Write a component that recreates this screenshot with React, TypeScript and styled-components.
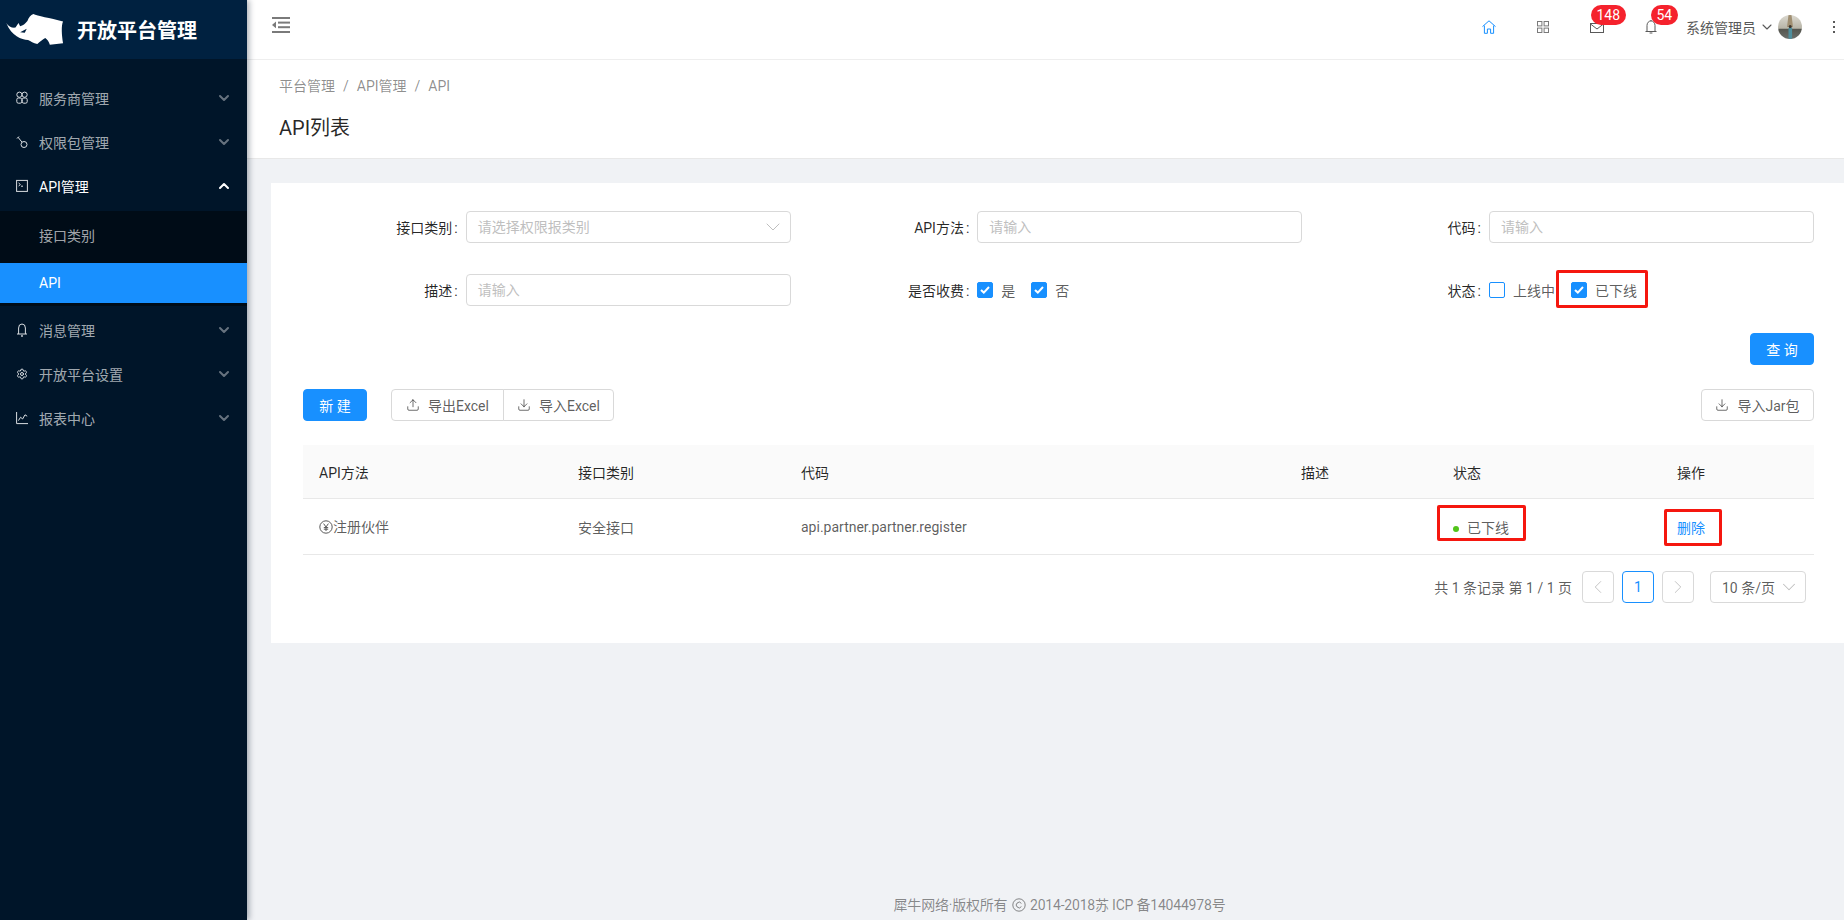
import React from "react";
import styled, { createGlobalStyle } from "styled-components";
import { ChevronDown, ChevronUp, ChevronLeft, ChevronRight, Download, Settings, Upload } from "lucide-react";

const GlobalStyle = createGlobalStyle`
    html, body {
        margin: 0;
        height: 100%;
        overflow: hidden;
        background: #f0f2f5;
    }
    body {
        font-family: Roboto, "Noto Sans CJK SC", sans-serif;
        font-size: 14px;
        color: rgba(0, 0, 0, 0.65);
    }
    * {
        box-sizing: border-box;
    }
`;

const Layout = styled.div`
    display: flex;
    width: 1844px;
    height: 920px;
    overflow: hidden;
`;

const Sider = styled.aside`
    flex: 0 0 247px;
    background: #001529;
    box-shadow: 2px 0 6px rgba(0, 21, 41, 0.35);
    position: relative;
    z-index: 2;
`;

const Brand = styled.div`
    height: 59px;
    background: #002140;
    display: flex;
    align-items: center;
    padding-left: 6px;
    gap: 13px;
    color: #fff;
    font-size: 20px;
    font-weight: 700;
`;

const Menu = styled.nav`
    padding-top: 15px;
`;

const MenuItem = styled.div<{ $open?: boolean }>`
    height: 40px;
    margin: 4px 0;
    padding: 0 15px 0 16px;
    display: flex;
    align-items: center;
    color: ${(p) => (p.$open ? "#fff" : "rgba(255, 255, 255, 0.65)")};
    svg.icon {
        width: 12px;
        height: 14px;
        margin-right: 11px;
    }
    span {
        flex: 1;
    }
`;

const SubMenu = styled.div`
    background: #000c17;
    padding: 4px 0 3px;
    margin-top: 5px;
`;

const SubItem = styled.div<{ $active?: boolean }>`
    height: 40px;
    padding-left: 39px;
    display: flex;
    align-items: center;
    color: ${(p) => (p.$active ? "#fff" : "rgba(255, 255, 255, 0.65)")};
    background: ${(p) => (p.$active ? "#1890ff" : "transparent")};
    & + & {
        margin-top: 8px;
    }
`;

const Main = styled.main`
    flex: 1;
    min-width: 0;
    display: flex;
    flex-direction: column;
`;

const TopBar = styled.header`
    height: 60px;
    flex: none;
    background: #fff;
    border-bottom: 1px solid #eeeeee;
    display: flex;
    align-items: center;
    padding-left: 25px;
    color: #595959;
`;

const CollapseIcon = styled.svg`
    margin-bottom: 9px;
`;

const TopActions = styled.div`
    margin-left: auto;
    display: flex;
    align-items: center;
`;

const TopIcon = styled.div<{ $w: number }>`
    position: relative;
    width: ${(p) => p.$w}px;
    height: 34px;
    display: flex;
    align-items: center;
    margin-bottom: 6px;
`;

const Badge = styled.span<{ $left: number }>`
    position: absolute;
    top: -5px;
    left: ${(p) => p.$left}px;
    height: 20px;
    padding: 0 5.5px;
    border-radius: 10px;
    background: #f5222d;
    color: #fff;
    font-size: 14px;
    line-height: 20px;
    white-space: nowrap;
`;

const UserName = styled.span`
    margin-bottom: 6px;
    white-space: nowrap;
`;

const Avatar = styled.svg`
    width: 24px;
    height: 24px;
    border-radius: 50%;
    margin: 0 0 6px 3px;
`;

const PageHead = styled.section`
    height: 99px;
    flex: none;
    background: #fff;
    border-bottom: 1px solid #e8e8e8;
    padding: 16px 32px 0;
`;

const Breadcrumb = styled.div`
    color: rgba(0, 0, 0, 0.45);
    line-height: 20px;
    i {
        font-style: normal;
        margin: 0 8px;
    }
`;

const PageTitle = styled.h1`
    margin: 16px 0 0;
    font-size: 20px;
    font-weight: 400;
    line-height: 32px;
    color: rgba(0, 0, 0, 0.85);
`;

const Card = styled.section`
    margin: 24px 0 0 24px;
    background: #fff;
    padding: 28px 30px 40px 32px;
`;

const FormGrid = styled.div`
    display: grid;
    grid-template-columns: repeat(3, 1fr);
    column-gap: 24px;
    row-gap: 31px;
`;

const Field = styled.div`
    display: flex;
    justify-content: flex-end;
    align-items: center;
    height: 32px;
`;

const Label = styled.label`
    color: rgba(0, 0, 0, 0.85);
    white-space: nowrap;
    &::after {
        content: ":";
        margin: 0 8px 0 2px;
    }
`;

const Control = styled.div`
    width: 325px;
    display: flex;
    align-items: center;
`;

const Input = styled.div`
    position: relative;
    width: 325px;
    height: 32px;
    border: 1px solid #d9d9d9;
    border-radius: 4px;
    padding: 0 11px;
    line-height: 30px;
    color: #bfbfbf;
    svg {
        position: absolute;
        right: 5px;
        top: 3px;
    }
`;

const Check = styled.label`
    display: inline-flex;
    align-items: center;
    padding-right: 8px;
    margin-right: 8px;
    white-space: nowrap;
`;

const CheckBox = styled.span<{ $on?: boolean }>`
    width: 16px;
    height: 16px;
    border-radius: 2px;
    border: 1px solid #1890ff;
    background: ${(p) => (p.$on ? "#1890ff" : "#fff")};
    margin-right: 8px;
    display: flex;
    align-items: center;
    justify-content: center;
`;

const Marked = styled.span<{ $inset: string }>`
    position: relative;
    display: inline-flex;
    &::after {
        content: "";
        position: absolute;
        inset: ${(p) => p.$inset};
        border: 3px solid #f5170f;
        border-radius: 2px;
        pointer-events: none;
    }
`;

const QueryRow = styled.div`
    display: flex;
    justify-content: flex-end;
    margin-top: 27px;
`;

const Toolbar = styled.div`
    display: flex;
    align-items: center;
    margin-top: 24px;
`;

const Button = styled.button<{ $primary?: boolean; $width: number }>`
    width: ${(p) => p.$width}px;
    height: 32px;
    padding: 0;
    font: inherit;
    border-radius: 4px;
    border: 1px solid ${(p) => (p.$primary ? "#1890ff" : "#d9d9d9")};
    background: ${(p) => (p.$primary ? "#1890ff" : "#fff")};
    color: ${(p) => (p.$primary ? "#fff" : "rgba(0, 0, 0, 0.65)")};
    display: inline-flex;
    align-items: center;
    justify-content: center;
    gap: 8px;
`;

const ButtonGroup = styled.div`
    display: flex;
    margin-left: 24px;
    ${Button}:first-child {
        border-radius: 4px 0 0 4px;
    }
    ${Button}:last-child {
        border-radius: 0 4px 4px 0;
        margin-left: -1px;
    }
`;

const ToolbarEnd = styled.div`
    margin-left: auto;
`;

const Table = styled.table`
    width: 1511px;
    margin-top: 24px;
    table-layout: fixed;
    border-collapse: separate;
    border-spacing: 0;
`;

const Th = styled.th<{ $w: number }>`
    width: ${(p) => p.$w}px;
    height: 54px;
    padding: 0 16px;
    text-align: left;
    font-weight: 400;
    color: rgba(0, 0, 0, 0.85);
    background: #fafafa;
    border-bottom: 1px solid #e8e8e8;
`;

const Td = styled.td`
    height: 56px;
    padding: 0 16px;
    border-bottom: 1px solid #e8e8e8;
    white-space: nowrap;
`;

const MethodCell = styled.span`
    display: inline-flex;
    align-items: center;
    svg {
        margin-top: 1px;
    }
`;

const StatusDot = styled.span`
    display: inline-block;
    width: 6px;
    height: 6px;
    border-radius: 50%;
    background: #52c41a;
    margin-right: 8px;
    vertical-align: 1px;
`;

const Link = styled.a`
    color: #1890ff;
`;

const Pagination = styled.div`
    display: flex;
    justify-content: flex-end;
    align-items: center;
    margin-top: 16px;
    padding-right: 8px;
    height: 32px;
`;

const PageTotal = styled.span`
    margin-right: 10px;
    white-space: nowrap;
`;

const PageBtn = styled.span<{ $active?: boolean }>`
    width: 32px;
    height: 32px;
    margin-right: 8px;
    border-radius: 4px;
    border: 1px solid ${(p) => (p.$active ? "#1890ff" : "#d9d9d9")};
    color: ${(p) => (p.$active ? "#1890ff" : "#bfbfbf")};
    display: flex;
    align-items: center;
    justify-content: center;
`;

const SizeSelect = styled.span`
    width: 96px;
    height: 32px;
    margin-left: 8px;
    border-radius: 4px;
    border: 1px solid #d9d9d9;
    padding: 0 11px;
    display: flex;
    align-items: center;
    justify-content: space-between;
    white-space: nowrap;
    svg {
        color: #bfbfbf;
        margin-right: -6px;
    }
`;

const Footer = styled.footer`
    margin-top: auto;
    padding: 0 0 6px 28px;
    text-align: center;
    color: rgba(0, 0, 0, 0.45);
    line-height: 18px;
    letter-spacing: -0.2px;
    svg {
        margin: 0 1px;
        vertical-align: -2px;
    }
`;

function RhinoLogo() {
    return (
        <svg width="58" height="33" viewBox="18 12 174 100" fill="#fff" style={{ flex: "none" }}>
            <path d="M18 42 C24 52 36 58 46 56 L55 42 L60 52 C68 50 76 44 82 36 C86 26 92 18 100 15 C112 22 150 26 190 38 C184 50 186 80 190 104 L150 108 C148 100 142 92 136 88 C128 92 120 100 112 106 C100 104 92 98 84 94 C64 92 34 82 18 42 Z" />
            <path d="M60 70 L80 60 L74 72 Z" fill="#002140" />
        </svg>
    );
}

const SideIcons: Record<string, React.ReactNode> = {
    partner: (
        <>
            <circle cx="3.4" cy="3.7" r="2.6" />
            <circle cx="8.6" cy="3.7" r="2.6" />
            <rect x="0.8" y="7" width="5" height="5.2" rx="1.6" />
            <rect x="6.2" y="7" width="5" height="5.2" rx="1.6" />
        </>
    ),
    key: (
        <>
            <circle cx="8" cy="9.5" r="3" />
            <path d="M6 7.2 L2 2.2 M1 3.5 L3 1.5" />
        </>
    ),
    api: (
        <>
            <rect x="0.6" y="1.4" width="10.8" height="11" />
            <path d="M2.6 4 L4.4 5.6 L2.6 7 M5 7.2 H7" />
        </>
    ),
    bell: (
        <>
            <path d="M1 11 H11 M2.6 11 V5 a3.4 4 0 0 1 6.8 0 V11" />
            <circle cx="6" cy="13" r="0.6" />
        </>
    ),
    chart: <path d="M0.6 1 V12.6 H12 M2.4 9.6 L4.6 6.2 L6.6 8 L9 3.8 L11.2 5.2" />,
};

function SideIcon({ name }: { name: string }) {
    if (name === "gear") {
        return <Settings className="icon" color="#d9dde1" />;
    }
    return (
        <svg className="icon" viewBox="0 0 12 14" fill="none" stroke="currentColor" strokeWidth="1" color="#d9dde1">
            {SideIcons[name]}
        </svg>
    );
}

function NavItem({ icon, label, open }: { icon: string; label: string; open?: boolean }) {
    return (
        <MenuItem $open={open}>
            <SideIcon name={icon} />
            <span>{label}</span>
            {open ? (
                <ChevronUp size={16} strokeWidth={3} />
            ) : (
                <ChevronDown size={16} strokeWidth={3} color="rgba(255,255,255,0.4)" />
            )}
        </MenuItem>
    );
}

function CheckMark() {
    return (
        <svg width="10" height="8" viewBox="0 0 10 8" fill="none" stroke="#fff" strokeWidth="2">
            <path d="M1 4 L3.8 6.6 L9 1" />
        </svg>
    );
}

function Option({ label, on }: { label: string; on?: boolean }) {
    return (
        <Check>
            <CheckBox $on={on}>{on && <CheckMark />}</CheckBox>
            {label}
        </Check>
    );
}

export default function App() {
    return (
        <Layout>
            <GlobalStyle />
            <Sider>
                <Brand>
                    <RhinoLogo />
                    开放平台管理
                </Brand>
                <Menu>
                    <NavItem icon="partner" label="服务商管理" />
                    <NavItem icon="key" label="权限包管理" />
                    <NavItem icon="api" label="API管理" open />
                    <SubMenu>
                        <SubItem>接口类别</SubItem>
                        <SubItem $active>API</SubItem>
                    </SubMenu>
                    <NavItem icon="bell" label="消息管理" />
                    <NavItem icon="gear" label="开放平台设置" />
                    <NavItem icon="chart" label="报表中心" />
                </Menu>
            </Sider>
            <Main>
                <TopBar>
                    <CollapseIcon width="18" height="16" viewBox="0 0 18 16" fill="#7a7a7a">
                        <rect x="0" y="0" width="18" height="2" />
                        <rect x="6" y="4.6" width="12" height="2" />
                        <rect x="6" y="9.2" width="12" height="2" />
                        <rect x="0" y="14" width="18" height="2" />
                        <path d="M4 4.6 V11.2 L0 7.9 Z" />
                    </CollapseIcon>
                    <TopActions>
                        <TopIcon $w={55}>
                            <svg width="14" height="14" viewBox="0 0 14 14" fill="none" stroke="#1890ff" strokeWidth="1">
                                <path d="M0.5 6.6 L7 0.8 L13.5 6.6 M2.4 5.6 V13.3 H5.4 V9 H8.6 V13.3 H11.6 V5.6" />
                            </svg>
                        </TopIcon>
                        <TopIcon $w={53}>
                            <svg width="12" height="12" viewBox="0 0 12 12" fill="none" stroke="#7a7a7a" strokeWidth="1">
                                <rect x="0.5" y="0.5" width="4.4" height="4.4" />
                                <rect x="7.1" y="0.5" width="4.4" height="4.4" />
                                <rect x="0.5" y="7.1" width="4.4" height="4.4" />
                                <rect x="7.1" y="7.1" width="4.4" height="4.4" />
                            </svg>
                        </TopIcon>
                        <TopIcon $w={55}>
                            <svg width="14" height="10" viewBox="0 0 14 10" fill="none" stroke="#595959" strokeWidth="1" style={{ marginTop: 3 }}>
                                <rect x="0.5" y="0.5" width="13" height="9" />
                                <path d="M0.5 1 L7 6 L13.5 1" />
                            </svg>
                            <Badge $left={1}>148</Badge>
                        </TopIcon>
                        <TopIcon $w={41}>
                            <svg width="12" height="14" viewBox="0 0 12 14" fill="none" stroke="#595959" strokeWidth="1">
                                <path d="M0.5 11.5 H11.5 M2 11.5 V5.5 a4 4.6 0 0 1 8 0 V11.5 M6 0 V1 M4.6 13 H7.4" />
                            </svg>
                            <Badge $left={6}>54</Badge>
                        </TopIcon>
                        <UserName>系统管理员</UserName>
                        <ChevronDown size={16} strokeWidth={1.6} color="#595959" style={{ margin: "0 0 6px 3px" }} />
                        <Avatar viewBox="0 0 24 24">
                            <defs>
                                <linearGradient id="avatar-sky" x1="0" y1="0" x2="0" y2="1">
                                    <stop offset="0" stopColor="#dcd9d0" />
                                    <stop offset="0.55" stopColor="#b8b5a8" />
                                    <stop offset="0.6" stopColor="#55564f" />
                                    <stop offset="1" stopColor="#6c6f6b" />
                                </linearGradient>
                            </defs>
                            <rect width="24" height="24" fill="url(#avatar-sky)" />
                            <path d="M10.5 0 H13.5 L15 12 H9 Z" fill="#a08f72" />
                            <rect x="10.5" y="12" width="3.6" height="12" rx="1.6" fill="#4f8e9c" />
                            <circle cx="12.2" cy="11.6" r="1.5" fill="#3b332d" />
                        </Avatar>
                        <svg width="4" height="14" viewBox="0 0 4 14" fill="#595959" style={{ margin: "0 8px 6px 30px" }}>
                            <rect x="1" y="1" width="2" height="2" />
                            <rect x="1" y="6" width="2" height="2" />
                            <rect x="1" y="11" width="2" height="2" />
                        </svg>
                    </TopActions>
                </TopBar>
                <PageHead>
                    <Breadcrumb>
                        平台管理<i>/</i>API管理<i>/</i>API
                    </Breadcrumb>
                    <PageTitle>API列表</PageTitle>
                </PageHead>
                <Card>
                    <FormGrid>
                        <Field>
                            <Label>接口类别</Label>
                            <Input>
                                请选择权限报类别
                                <ChevronDown size={24} color="#bfbfbf" strokeWidth={1} />
                            </Input>
                        </Field>
                        <Field>
                            <Label>API方法</Label>
                            <Input>请输入</Input>
                        </Field>
                        <Field>
                            <Label>代码</Label>
                            <Input>请输入</Input>
                        </Field>
                        <Field>
                            <Label>描述</Label>
                            <Input>请输入</Input>
                        </Field>
                        <Field>
                            <Label>是否收费</Label>
                            <Control>
                                <Option label="是" on />
                                <Option label="否" on />
                            </Control>
                        </Field>
                        <Field>
                            <Label>状态</Label>
                            <Control>
                                <Option label="上线中" />
                                <Marked $inset="-10px 5px -8px -15px">
                                    <Option label="已下线" on />
                                </Marked>
                            </Control>
                        </Field>
                    </FormGrid>
                    <QueryRow>
                        <Button $primary $width={64}>查 询</Button>
                    </QueryRow>
                    <Toolbar>
                        <Button $primary $width={64}>新 建</Button>
                        <ButtonGroup>
                            <Button $width={113}>
                                <Upload size={14} strokeWidth={1.5} />
                                导出Excel
                            </Button>
                            <Button $width={111}>
                                <Download size={14} strokeWidth={1.5} />
                                导入Excel
                            </Button>
                        </ButtonGroup>
                        <ToolbarEnd>
                            <Button $width={113}>
                                <Download size={14} strokeWidth={1.5} />
                                导入Jar包
                            </Button>
                        </ToolbarEnd>
                    </Toolbar>
                    <Table>
                        <thead>
                            <tr>
                                <Th $w={259}>API方法</Th>
                                <Th $w={223}>接口类别</Th>
                                <Th $w={500}>代码</Th>
                                <Th $w={152}>描述</Th>
                                <Th $w={224}>状态</Th>
                                <Th $w={153}>操作</Th>
                            </tr>
                        </thead>
                        <tbody>
                            <tr>
                                <Td>
                                    <MethodCell>
                                        <svg width="14" height="14" viewBox="0 0 14 14" fill="none" stroke="#595959" strokeWidth="1">
                                            <circle cx="7" cy="7" r="6.2" />
                                            <path d="M4.6 3.6 L7 7 L9.4 3.6 M7 7 V11 M4.8 7.6 H9.2 M4.8 9.2 H9.2" />
                                        </svg>
                                        注册伙伴
                                    </MethodCell>
                                </Td>
                                <Td>安全接口</Td>
                                <Td>api.partner.partner.register</Td>
                                <Td />
                                <Td>
                                    <Marked $inset="-12px -17px -4px -16px">
                                        <span>
                                            <StatusDot />
                                            已下线
                                        </span>
                                    </Marked>
                                </Td>
                                <Td>
                                    <Marked $inset="-8px -17px -9px -13px">
                                        <Link>删除</Link>
                                    </Marked>
                                </Td>
                            </tr>
                        </tbody>
                    </Table>
                    <Pagination>
                        <PageTotal>共 1 条记录 第 1 / 1 页</PageTotal>
                        <PageBtn>
                            <ChevronLeft size={22} strokeWidth={1} />
                        </PageBtn>
                        <PageBtn $active>1</PageBtn>
                        <PageBtn>
                            <ChevronRight size={22} strokeWidth={1} />
                        </PageBtn>
                        <SizeSelect>
                            10 条/页
                            <ChevronDown size={22} strokeWidth={1.1} />
                        </SizeSelect>
                    </Pagination>
                </Card>
                <Footer>
                    犀牛网络·版权所有{" "}
                    <svg width="14" height="14" viewBox="0 0 14 14" fill="none" stroke="currentColor" strokeWidth="1">
                        <circle cx="7" cy="7" r="6.2" />
                        <path d="M9.4 5.4 A2.8 2.8 0 1 0 9.4 8.6" />
                    </svg>{" "}
                    2014-2018苏 ICP 备14044978号
                </Footer>
            </Main>
        </Layout>
    );
}
